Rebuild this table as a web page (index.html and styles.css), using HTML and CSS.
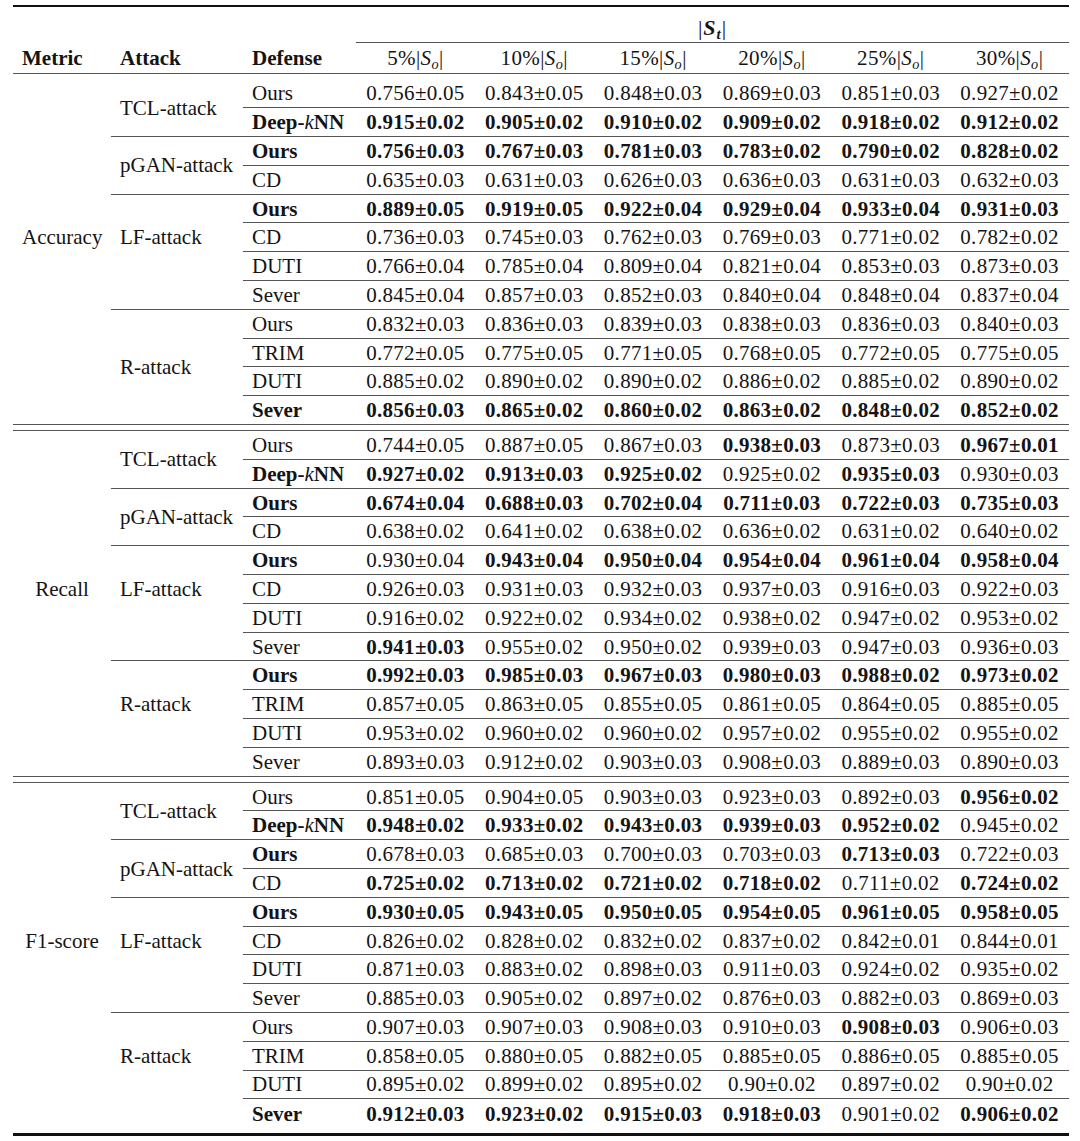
FILE: index.html
```html
<!DOCTYPE html>
<html>
<head>
<meta charset="utf-8">
<link rel="stylesheet" href="styles.css">
</head>
<body>
<table class="results">
<colgroup><col class="c1"><col class="c2"><col class="c3"><col class="cv"><col class="cv"><col class="cv"><col class="cv"><col class="cv"><col class="cv"></colgroup>
<thead>
<tr class="h1"><th></th><th></th><th></th><th colspan="6" class="st">|<b><i>S</i><sub>t</sub></b>|</th></tr>
<tr class="h2"><th>Metric</th><th>Attack</th><th>Defense</th><th class="v">5%|<i>S</i><sub>o</sub>|</th><th class="v">10%|<i>S</i><sub>o</sub>|</th><th class="v">15%|<i>S</i><sub>o</sub>|</th><th class="v">20%|<i>S</i><sub>o</sub>|</th><th class="v">25%|<i>S</i><sub>o</sub>|</th><th class="v">30%|<i>S</i><sub>o</sub>|</th></tr>
<tr class="gap"><td colspan="9"></td></tr>
</thead>
<tbody>
<tr><td class="m lift" rowspan="12">Accuracy</td><td class="a" rowspan="2">TCL-attack</td><td class="d">Ours</td><td>0.756±0.05</td><td>0.843±0.05</td><td>0.848±0.03</td><td>0.869±0.03</td><td>0.851±0.03</td><td>0.927±0.02</td></tr>
<tr class="bold"><td class="d">Deep-<i>k</i>NN</td><td>0.915±0.02</td><td>0.905±0.02</td><td>0.910±0.02</td><td>0.909±0.02</td><td>0.918±0.02</td><td>0.912±0.02</td></tr>
<tr class="bold"><td class="a" rowspan="2">pGAN-attack</td><td class="d">Ours</td><td>0.756±0.03</td><td>0.767±0.03</td><td>0.781±0.03</td><td>0.783±0.02</td><td>0.790±0.02</td><td>0.828±0.02</td></tr>
<tr><td class="d">CD</td><td>0.635±0.03</td><td>0.631±0.03</td><td>0.626±0.03</td><td>0.636±0.03</td><td>0.631±0.03</td><td>0.632±0.03</td></tr>
<tr class="bold"><td class="a lift" rowspan="4">LF-attack</td><td class="d">Ours</td><td>0.889±0.05</td><td>0.919±0.05</td><td>0.922±0.04</td><td>0.929±0.04</td><td>0.933±0.04</td><td>0.931±0.03</td></tr>
<tr><td class="d">CD</td><td>0.736±0.03</td><td>0.745±0.03</td><td>0.762±0.03</td><td>0.769±0.03</td><td>0.771±0.02</td><td>0.782±0.02</td></tr>
<tr><td class="d">DUTI</td><td>0.766±0.04</td><td>0.785±0.04</td><td>0.809±0.04</td><td>0.821±0.04</td><td>0.853±0.03</td><td>0.873±0.03</td></tr>
<tr><td class="d">Sever</td><td>0.845±0.04</td><td>0.857±0.03</td><td>0.852±0.03</td><td>0.840±0.04</td><td>0.848±0.04</td><td>0.837±0.04</td></tr>
<tr><td class="a" rowspan="4">R-attack</td><td class="d">Ours</td><td>0.832±0.03</td><td>0.836±0.03</td><td>0.839±0.03</td><td>0.838±0.03</td><td>0.836±0.03</td><td>0.840±0.03</td></tr>
<tr><td class="d">TRIM</td><td>0.772±0.05</td><td>0.775±0.05</td><td>0.771±0.05</td><td>0.768±0.05</td><td>0.772±0.05</td><td>0.775±0.05</td></tr>
<tr><td class="d">DUTI</td><td>0.885±0.02</td><td>0.890±0.02</td><td>0.890±0.02</td><td>0.886±0.02</td><td>0.885±0.02</td><td>0.890±0.02</td></tr>
<tr class="bold"><td class="d">Sever</td><td>0.856±0.03</td><td>0.865±0.02</td><td>0.860±0.02</td><td>0.863±0.02</td><td>0.848±0.02</td><td>0.852±0.02</td></tr>
<tr class="gap"><td colspan="9"></td></tr>

<tr><td class="m lift" rowspan="12">Recall</td><td class="a" rowspan="2">TCL-attack</td><td class="d">Ours</td><td>0.744±0.05</td><td>0.887±0.05</td><td>0.867±0.03</td><td class="b">0.938±0.03</td><td>0.873±0.03</td><td class="b">0.967±0.01</td></tr>
<tr><td class="d b">Deep-<i>k</i>NN</td><td class="b">0.927±0.02</td><td class="b">0.913±0.03</td><td class="b">0.925±0.02</td><td>0.925±0.02</td><td class="b">0.935±0.03</td><td>0.930±0.03</td></tr>
<tr class="bold"><td class="a" rowspan="2">pGAN-attack</td><td class="d">Ours</td><td>0.674±0.04</td><td>0.688±0.03</td><td>0.702±0.04</td><td>0.711±0.03</td><td>0.722±0.03</td><td>0.735±0.03</td></tr>
<tr><td class="d">CD</td><td>0.638±0.02</td><td>0.641±0.02</td><td>0.638±0.02</td><td>0.636±0.02</td><td>0.631±0.02</td><td>0.640±0.02</td></tr>
<tr><td class="a lift" rowspan="4">LF-attack</td><td class="d b">Ours</td><td>0.930±0.04</td><td class="b">0.943±0.04</td><td class="b">0.950±0.04</td><td class="b">0.954±0.04</td><td class="b">0.961±0.04</td><td class="b">0.958±0.04</td></tr>
<tr><td class="d">CD</td><td>0.926±0.03</td><td>0.931±0.03</td><td>0.932±0.03</td><td>0.937±0.03</td><td>0.916±0.03</td><td>0.922±0.03</td></tr>
<tr><td class="d">DUTI</td><td>0.916±0.02</td><td>0.922±0.02</td><td>0.934±0.02</td><td>0.938±0.02</td><td>0.947±0.02</td><td>0.953±0.02</td></tr>
<tr><td class="d">Sever</td><td class="b">0.941±0.03</td><td>0.955±0.02</td><td>0.950±0.02</td><td>0.939±0.03</td><td>0.947±0.03</td><td>0.936±0.03</td></tr>
<tr class="bold"><td class="a lift" rowspan="4">R-attack</td><td class="d">Ours</td><td>0.992±0.03</td><td>0.985±0.03</td><td>0.967±0.03</td><td>0.980±0.03</td><td>0.988±0.02</td><td>0.973±0.02</td></tr>
<tr><td class="d">TRIM</td><td>0.857±0.05</td><td>0.863±0.05</td><td>0.855±0.05</td><td>0.861±0.05</td><td>0.864±0.05</td><td>0.885±0.05</td></tr>
<tr><td class="d">DUTI</td><td>0.953±0.02</td><td>0.960±0.02</td><td>0.960±0.02</td><td>0.957±0.02</td><td>0.955±0.02</td><td>0.955±0.02</td></tr>
<tr><td class="d">Sever</td><td>0.893±0.03</td><td>0.912±0.02</td><td>0.903±0.03</td><td>0.908±0.03</td><td>0.889±0.03</td><td>0.890±0.03</td></tr>
<tr class="gap"><td colspan="9"></td></tr>

<tr><td class="m lift nb" rowspan="12">F1-score</td><td class="a" rowspan="2">TCL-attack</td><td class="d">Ours</td><td>0.851±0.05</td><td>0.904±0.05</td><td>0.903±0.03</td><td>0.923±0.03</td><td>0.892±0.03</td><td class="b">0.956±0.02</td></tr>
<tr><td class="d b">Deep-<i>k</i>NN</td><td class="b">0.948±0.02</td><td class="b">0.933±0.02</td><td class="b">0.943±0.03</td><td class="b">0.939±0.03</td><td class="b">0.952±0.02</td><td>0.945±0.02</td></tr>
<tr><td class="a" rowspan="2">pGAN-attack</td><td class="d b">Ours</td><td>0.678±0.03</td><td>0.685±0.03</td><td>0.700±0.03</td><td>0.703±0.03</td><td class="b">0.713±0.03</td><td>0.722±0.03</td></tr>
<tr><td class="d">CD</td><td class="b">0.725±0.02</td><td class="b">0.713±0.02</td><td class="b">0.721±0.02</td><td class="b">0.718±0.02</td><td>0.711±0.02</td><td class="b">0.724±0.02</td></tr>
<tr class="bold"><td class="a lift" rowspan="4">LF-attack</td><td class="d">Ours</td><td>0.930±0.05</td><td>0.943±0.05</td><td>0.950±0.05</td><td>0.954±0.05</td><td>0.961±0.05</td><td>0.958±0.05</td></tr>
<tr><td class="d">CD</td><td>0.826±0.02</td><td>0.828±0.02</td><td>0.832±0.02</td><td>0.837±0.02</td><td>0.842±0.01</td><td>0.844±0.01</td></tr>
<tr><td class="d">DUTI</td><td>0.871±0.03</td><td>0.883±0.02</td><td>0.898±0.03</td><td>0.911±0.03</td><td>0.924±0.02</td><td>0.935±0.02</td></tr>
<tr><td class="d">Sever</td><td>0.885±0.03</td><td>0.905±0.02</td><td>0.897±0.02</td><td>0.876±0.03</td><td>0.882±0.03</td><td>0.869±0.03</td></tr>
<tr><td class="a lift nb" rowspan="4">R-attack</td><td class="d">Ours</td><td>0.907±0.03</td><td>0.907±0.03</td><td>0.908±0.03</td><td>0.910±0.03</td><td class="b">0.908±0.03</td><td>0.906±0.03</td></tr>
<tr><td class="d">TRIM</td><td>0.858±0.05</td><td>0.880±0.05</td><td>0.882±0.05</td><td>0.885±0.05</td><td>0.886±0.05</td><td>0.885±0.05</td></tr>
<tr><td class="d">DUTI</td><td>0.895±0.02</td><td>0.899±0.02</td><td>0.895±0.02</td><td>0.90±0.02</td><td>0.897±0.02</td><td>0.90±0.02</td></tr>
<tr class="last"><td class="d b">Sever</td><td class="b">0.912±0.03</td><td class="b">0.923±0.02</td><td class="b">0.915±0.03</td><td class="b">0.918±0.03</td><td>0.901±0.02</td><td class="b">0.906±0.02</td></tr>
<tr class="gap end"><td colspan="9"></td></tr>
</tbody>
</table>
</body>
</html>
```
FILE: styles.css
```css
body {
  margin: 5px 0 0 13px;
  background: #fff;
  font-family: "Liberation Serif", "Times New Roman", serif;
  font-size: 21px;
  color: #141414;
}
.results {
  border-collapse: collapse;
  table-layout: fixed;
  width: 1056px;
}
col.c1 { width: 98px; }
col.c2 { width: 132px; }
col.c3 { width: 113px; }
col.cv { width: 118.83px; }
th, td {
  padding: 0 9px;
  white-space: nowrap;
  line-height: 24px;
}
th {
  font-weight: bold;
  text-align: left;
}
.h1 th {
  border-top: 2px solid #111;
  height: 33px;
  vertical-align: bottom;
  padding-bottom: 2px;
}
.h1 th.st {
  text-align: center;
  font-weight: normal;
  font-size: 22px;
  letter-spacing: 1px;
  border-bottom: 1px solid #555;
}
.h2 th {
  height: 30px;
  border-bottom: 1px solid #555;
}
.h2 th.v {
  text-align: center;
  font-weight: normal;
  padding: 0 4px;
  letter-spacing: 0.4px;
}
sub {
  font-size: 0.68em;
  line-height: 0;
  vertical-align: -0.25em;
  font-style: italic;
}
tbody tr { height: 28.8px; }
tbody td {
  border-bottom: 1px solid #555;
  text-align: center;
  padding: 0 4px;
  letter-spacing: 0.3px;
}
tr.gap { height: 5px; }
tr.gap td {
  height: 5px;
  padding: 0;
}
tr.gap.end td {
  height: 5px;
  border-bottom: 3px solid #111;
}
td.m { text-align: center; padding: 0 9px; letter-spacing: 0; }
td.a, td.d { text-align: left; padding: 0 9px; letter-spacing: 0; }
td.lift { padding-bottom: 28.8px; }
tr.bold td:not(.a):not(.m), td.b { font-weight: bold; }
td.d i { font-weight: normal; }
tr.last td, td.nb { border-bottom: none; }
```
